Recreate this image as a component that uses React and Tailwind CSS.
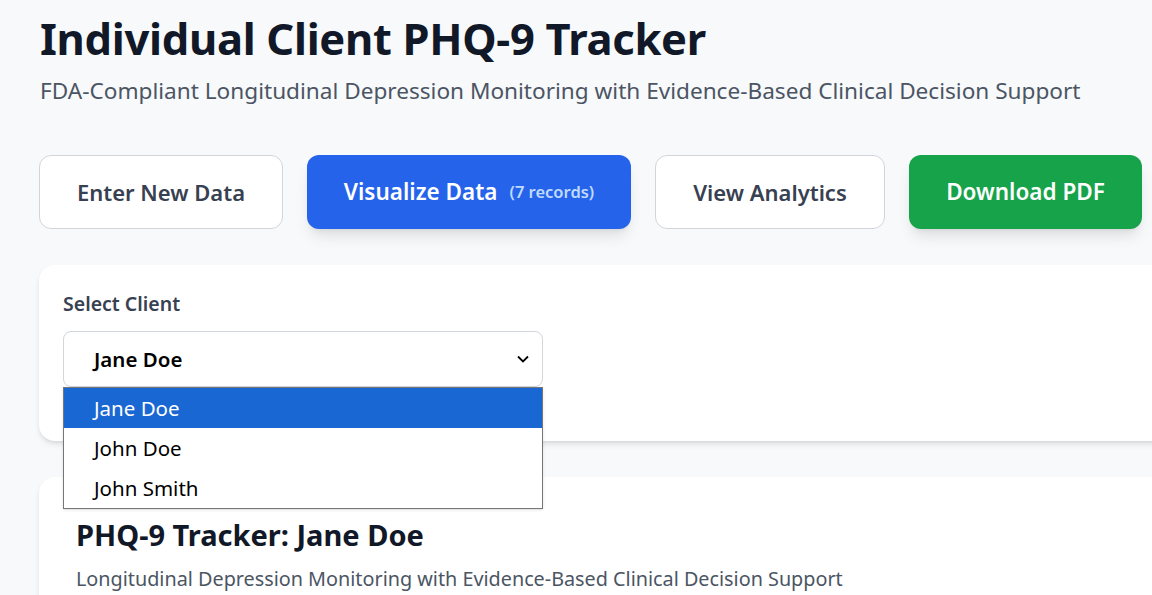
import React, { useState } from "react";

const clients = ["Jane Doe", "John Doe", "John Smith"];

const App = () => {
    const [client] = useState("Jane Doe");

    return (
        <div className="w-[1152px] h-[595px] overflow-hidden bg-[#f8f9fb] font-['Noto_Sans',sans-serif]">
            <div className="w-[1240px] px-[39px] pt-[10px]">
                {/* header */}
                <h1 className="pl-px text-[43.5px] font-bold leading-[56px] text-[#111827] tracking-[-0.3px]">
                    Individual Client PHQ-9 Tracker
                </h1>
                <p className="mt-[10px] pl-px text-[22.6px] leading-[30px] text-[#4b5563]">
                    FDA-Compliant Longitudinal Depression Monitoring with Evidence-Based Clinical Decision Support
                </p>

                {/* tabs */}
                <div className="mt-[49px] flex gap-6">
                    <button className="h-[74px] w-[244px] rounded-xl border border-gray-300 bg-white text-[22px] font-semibold text-[#374151]">
                        Enter New Data
                    </button>
                    <button className="h-[74px] w-[324px] rounded-xl bg-[#2563eb] text-[22.5px] font-semibold text-white shadow-lg flex items-center justify-center">
                        Visualize Data
                        <span className="ml-3 text-[16.5px] text-[#bfdbfe]">(7 records)</span>
                    </button>
                    <button className="h-[74px] w-[230px] rounded-xl border border-gray-300 bg-white text-[22px] font-semibold text-[#374151]">
                        View Analytics
                    </button>
                    <button className="h-[74px] w-[233px] rounded-xl bg-[#16a34a] text-[22.5px] font-semibold text-white shadow-lg">
                        Download PDF
                    </button>
                </div>

                {/* client select */}
                <div className="mt-9 rounded-2xl bg-white shadow-md px-6 pt-6 pb-[54px] relative">
                    <label className="block text-[19.5px] font-semibold leading-[30px] text-[#374151]">Select Client</label>
                    <div className="relative mt-3 w-[480px]">
                        <div className="flex h-[56px] items-center justify-between rounded-lg border border-gray-300 bg-white pl-[30px] pr-3">
                            <span className="text-[20.5px] font-semibold text-black">{client}</span>
                            <svg width="14" height="14" viewBox="0 0 14 14" fill="none" stroke="#000" strokeWidth="1.8">
                                <path d="M2 4.5 L7 9.5 L12 4.5" />
                            </svg>
                        </div>
                        <div className="absolute left-0 top-[56px] z-10 w-[480px] border border-[#767676] bg-white shadow-sm">
                            {clients.map((c, i) => (
                                <div
                                    key={c}
                                    className={
                                        i === 0
                                            ? "h-10 flex items-center pl-[30px] text-[20.5px] bg-[#1967d2] text-white"
                                            : "h-10 flex items-center pl-[30px] text-[20.5px] text-black"
                                    }
                                >
                                    {c}
                                </div>
                            ))}
                        </div>
                    </div>
                </div>

                {/* tracker card */}
                <div className="mt-9 rounded-2xl bg-white shadow-md px-9 pt-[38px] pb-8">
                    <h2 className="pl-px text-[29px] font-bold leading-[40px] text-[#111827]">PHQ-9 Tracker: Jane Doe</h2>
                    <p className="mt-[10px] pl-px text-[19.8px] leading-[28px] text-[#4b5563]">
                        Longitudinal Depression Monitoring with Evidence-Based Clinical Decision Support
                    </p>
                </div>
            </div>
        </div>
    );
};

export default App;
